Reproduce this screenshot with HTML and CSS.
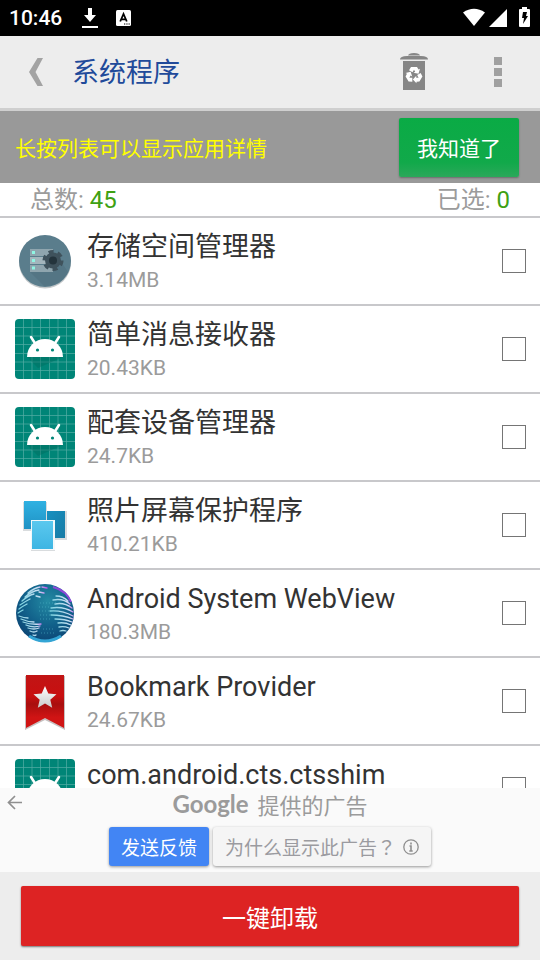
FILE: index.html
```html
<!DOCTYPE html>
<html lang="zh-CN">
<head>
    <meta charset="UTF-8">
    <meta name="viewport" content="width=device-width, initial-scale=1.0">
    <title>系统程序</title>
    <link rel="stylesheet" href="styles.css">
</head>
<body>
    <!-- Shared icons -->
    <svg class="sprite" aria-hidden="true">
        <symbol id="icon-android" viewBox="0 0 60 60">
            <rect width="60" height="60" rx="4" fill="#008577"/>
            <path d="M8.500 0v60M17 0v60M25.500 0v60M34.500 0v60M43 0v60M51.500 0v60M0 8.500h60M0 17h60M0 25.500h60M0 34.500h60M0 43h60M0 51.500h60" stroke="#54aea5" stroke-width="0.700" fill="none"/>
            <path d="M12 38l11 11 25-11z" fill="#00695c" opacity="0.400"/>
            <path d="M12 38a18 18 0 0 1 36 0z" fill="#fff"/>
            <path d="M16 18l4.500 7M44 18l-4.500 7" stroke="#fff" stroke-width="2.500" stroke-linecap="round"/>
            <circle cx="22.500" cy="31" r="1.600" fill="#008577"/>
            <circle cx="37.500" cy="31" r="1.600" fill="#008577"/>
        </symbol>
    </svg>

    <div class="status-bar">
        <span class="clock">10:46</span>
        <svg width="16" height="22" viewBox="0 0 16 22">
            <path d="M6 1h4v7h4l-6 7-6-7h4z" fill="#fff"/>
            <path d="M0 20h16" stroke="#fff" stroke-width="2"/>
        </svg>
        <svg width="15" height="16" viewBox="0 0 15 16">
            <rect width="15" height="16" rx="1.500" fill="#fff"/>
            <path d="M4.200 11.500L7.500 4l3.300 7.500M5.500 9.300h4" fill="none" stroke="#000" stroke-width="1.800"/>
            <path d="M8 14h1.300M10.300 14h1.300M12.500 14h1.300" stroke="#000" stroke-width="1.200"/>
        </svg>
        <div class="status-right">
            <svg width="68" height="22" viewBox="0 0 68 22">
                <path d="M1 5.500Q12 -2 23 5.500L12 19z" fill="#fff"/>
                <path d="M27 20L45 2v18z" fill="#fff"/>
                <path d="M60 0h5v2h2q1 0 1 1v16q0 1-1 1h-9q-1 0-1-1V3q0-1 1-1h2z" fill="#fff"/>
                <path d="M61 5h4l-1 4h2l-5 8 1-6h-2z" fill="#000"/>
            </svg>
        </div>
    </div>

    <header class="app-header">
        <button class="icon-btn" type="button" aria-label="返回">
            <svg width="14" height="28" viewBox="0 0 14 28">
                <path d="M8.500 0H14L6.500 14 14 28H8.500L0 14z" fill="#a3a3a3"/>
            </svg>
        </button>
        <h1>系统程序</h1>
        <button class="icon-btn btn-bin" type="button" aria-label="回收站">
            <svg width="28" height="38" viewBox="0 0 28 38">
                <path d="M8 2.500Q8.500 0 14 0t6 2.500z" fill="#868686"/>
                <path d="M0 6.500Q0 3 7 3h14q7 0 7 3.500z" fill="#868686"/>
                <rect x="3" y="8" width="22" height="29" fill="#868686"/>
                <g fill="#fff">
                    <path id="arc" d="M11 14h6l1.500 2.500 1.500-.8-1.500 5-5-1 1.700-1-1.200-2-1.500 2.500-3.500-2z"/>
                    <use href="#arc" transform="rotate(120 14 22)"/>
                    <use href="#arc" transform="rotate(240 14 22)"/>
                </g>
            </svg>
        </button>
        <button class="icon-btn" type="button" aria-label="更多">
            <svg width="8" height="30" viewBox="0 0 8 30">
                <path d="M0 0h8v8H0zM0 11h8v8H0zM0 22h8v8H0z" fill="#a0a0a0"/>
            </svg>
        </button>
    </header>

    <div class="tip-bar">
        <p>长按列表可以显示应用详情</p>
        <button class="btn-ok" type="button">我知道了</button>
    </div>

    <div class="counts">
        <span>总数: <b>45</b></span>
        <span>已选: <b>0</b></span>
    </div>

    <ul class="app-list">
        <li>
            <label class="app-row">
                <svg class="app-icon" viewBox="0 0 60 60">
                    <circle cx="30" cy="31.500" r="26" fill="#c4c8ca"/>
                    <circle cx="30" cy="30" r="26" fill="#5a7d8c"/>
                    <path d="M15 41l14 14a26 26 0 0 0 24-14L43 26z" fill="#547584"/>
                    <path d="M15 18h23v7H15zM15 34h23v7H15z" fill="#8fa5ae"/>
                    <path d="M15 26h23v7H15z" fill="#a3b5bc"/>
                    <path d="M17 20h3v3h-3zM17 28h3v3h-3zM17 35.500h3v3h-3z" fill="#8ff5e3"/>
                    <circle cx="38" cy="29.500" r="8" fill="#3f525c"/>
                    <circle cx="38" cy="29.500" r="8.800" fill="none" stroke="#3f525c" stroke-width="3.500" stroke-dasharray="5 4.200"/>
                    <circle cx="38" cy="29.500" r="4" fill="#24343c"/>
                </svg>
                <span class="app-info">
                    <span class="app-name">存储空间管理器</span>
                    <span class="app-size">3.14MB</span>
                </span>
                <input type="checkbox">
            </label>
        </li>
        <li>
            <label class="app-row">
                <svg class="app-icon"><use href="#icon-android"/></svg>
                <span class="app-info">
                    <span class="app-name">简单消息接收器</span>
                    <span class="app-size">20.43KB</span>
                </span>
                <input type="checkbox">
            </label>
        </li>
        <li>
            <label class="app-row">
                <svg class="app-icon"><use href="#icon-android"/></svg>
                <span class="app-info">
                    <span class="app-name">配套设备管理器</span>
                    <span class="app-size">24.7KB</span>
                </span>
                <input type="checkbox">
            </label>
        </li>
        <li>
            <label class="app-row">
                <svg class="app-icon" viewBox="0 0 60 60">
                    <defs>
                        <linearGradient id="photo-a" x2="0" y2="1"><stop stop-color="#2fb1e2"/><stop offset="1" stop-color="#2092c4"/></linearGradient>
                        <linearGradient id="photo-b" x2="1" y2="1"><stop stop-color="#1790c0"/><stop offset="1" stop-color="#187ba5"/></linearGradient>
                        <linearGradient id="photo-c" x2="0" y2="1"><stop stop-color="#5bc8ee"/><stop offset="1" stop-color="#3db5e3"/></linearGradient>
                    </defs>
                    <path d="M8 7h24v29H8zM31 16h21v29H31zM16 25h24v31H16z" fill="#d9dcde"/>
                    <rect x="9" y="6" width="22" height="28" fill="url(#photo-a)"/>
                    <rect x="32" y="16" width="18" height="27" fill="url(#photo-b)"/>
                    <rect x="16" y="25" width="24" height="30" fill="#f3f8fa"/>
                    <rect x="17" y="26" width="21" height="28" fill="url(#photo-c)"/>
                </svg>
                <span class="app-info">
                    <span class="app-name">照片屏幕保护程序</span>
                    <span class="app-size">410.21KB</span>
                </span>
                <input type="checkbox">
            </label>
        </li>
        <li>
            <label class="app-row">
                <svg class="app-icon" viewBox="0 0 60 60">
                    <defs>
                        <radialGradient id="globe" cx="0.550" cy="0.300" r="0.700">
                            <stop stop-color="#238aa3"/>
                            <stop offset="0.600" stop-color="#11608a"/>
                            <stop offset="1" stop-color="#0c4675"/>
                        </radialGradient>
                        <linearGradient id="land" x1="0" y1="0.300" x2="1" y2="0">
                            <stop stop-color="#7fd3e0"/>
                            <stop offset="0.700" stop-color="#c9ddf2"/>
                            <stop offset="1" stop-color="#c04ee8"/>
                        </linearGradient>
                    </defs>
                    <circle cx="30" cy="30" r="29" fill="url(#globe)"/>
                    <g fill="none" stroke="url(#land)" stroke-width="1.300" stroke-linecap="round">
                        <path d="M13 10q6-5 12-6M10 14q7-6 14-7M7 18q7-6 12-7M5 22q6-4 10-6M4 26q4-3 8-5M3 30q3-2 5-3M27 4l5 1M24 9l5 1M21 13l4 1"/>
                        <path d="M4 33q5 2 9 2M6 36q7 3 13 3M8 39q8 3 18 2M11 42q7 3 14 1M13 45q6 2 11 0M15 48q4 2 7 0M18 52q2 1 3 0"/>
                        <path d="M41 13q7 0 12 5M38 17q10-2 17 4M40 21q9-2 17 4M36 25q12-2 22 4M35 28q12-1 23 5M36 32q12 0 22 4M40 36q10 0 17 3M43 40q7-1 13 2M44 44q5-1 10 1M45 48q3-1 6 0"/>
                    </g>
                    <path d="M38 4q14 4 18 15" fill="none" stroke="#8e48d8" stroke-width="2"/>
                    <path d="M14 53q16 10 32 0" fill="none" stroke="#33a5d5" stroke-width="3"/>
                    <path d="M25 20h16M24 24h11M24 28h10M25 32h10M25 36h12M28 46h12M26 50h14" stroke="#4fb2c5" stroke-dasharray="1 2" opacity="0.600"/>
                </svg>
                <span class="app-info">
                    <span class="app-name">Android System WebView</span>
                    <span class="app-size">180.3MB</span>
                </span>
                <input type="checkbox">
            </label>
        </li>
        <li>
            <label class="app-row">
                <svg class="app-icon" viewBox="0 0 60 60">
                    <defs>
                        <linearGradient id="ribbon" x2="0" y2="1">
                            <stop stop-color="#c11515"/>
                            <stop offset="0.400" stop-color="#c80f10"/>
                            <stop offset="0.550" stop-color="#a80e0e"/>
                            <stop offset="0.800" stop-color="#d01414"/>
                        </linearGradient>
                        <linearGradient id="star" x2="0" y2="1"><stop stop-color="#fff"/><stop offset="1" stop-color="#c9c9c9"/></linearGradient>
                    </defs>
                    <path d="M10 5h40v54L30 49 10 59z" fill="#c6c0c0"/>
                    <path d="M11 4h38v53L30 47 11 57z" fill="url(#ribbon)"/>
                    <path d="M30 15l3.300 7.500 8.200.8-6.200 5.400 1.900 8.100-7.200-4.300-7.200 4.300 1.900-8.100-6.200-5.400 8.200-.8z" fill="url(#star)"/>
                </svg>
                <span class="app-info">
                    <span class="app-name">Bookmark Provider</span>
                    <span class="app-size">24.67KB</span>
                </span>
                <input type="checkbox">
            </label>
        </li>
        <li>
            <label class="app-row">
                <svg class="app-icon"><use href="#icon-android"/></svg>
                <span class="app-info">
                    <span class="app-name">com.android.cts.ctsshim</span>
                </span>
                <input type="checkbox">
            </label>
        </li>
    </ul>

    <section class="ad">
        <button class="ad-back" type="button" aria-label="返回广告">
            <svg width="15" height="15" viewBox="0 0 15 15">
                <path d="M15 7.500H1.500M8 1L1.500 7.500 8 14" fill="none" stroke="#8f8f8f" stroke-width="1.700"/>
            </svg>
        </button>
        <p class="ad-title"><span class="google">Google</span> 提供的广告</p>
        <div class="ad-actions">
            <button class="btn-feedback" type="button">发送反馈</button>
            <button class="btn-why" type="button">
                <span>为什么显示此广告<span class="mark" lang="zh-TW">？</span></span>
                <svg width="16" height="16" viewBox="0 0 16 16">
                    <circle cx="8" cy="8" r="7.200" fill="none" stroke="#8f8f8f" stroke-width="1.300"/>
                    <path d="M8 3.500v2M6.500 7H8v5M6.300 12h3.400" fill="none" stroke="#8f8f8f" stroke-width="1.600"/>
                </svg>
            </button>
        </div>
    </section>

    <footer class="footer">
        <button class="btn-uninstall" type="button">一键卸载</button>
    </footer>
</body>
</html>
```
FILE: styles.css
```css
:root {
    --bg-bar: #ededed;
    --line: #c8c8cb;
    --text-primary: #333333;
    --text-light: #9b9b9b;
    --green: #3ea113;
}

* {
    box-sizing: border-box;
}

body {
    margin: 0;
    height: 100vh;
    display: flex;
    flex-direction: column;
    font-family: Roboto, 'Noto Sans CJK SC', sans-serif;
    background-color: #ffffff;
    color: var(--text-primary);
}

h1, p, ul {
    margin: 0;
    padding: 0;
}

button {
    margin: 0;
    padding: 0;
    border: none;
    background: none;
    font-family: inherit;
    cursor: pointer;
}

svg {
    display: block;
    flex-shrink: 0;
}

.sprite {
    position: absolute;
    width: 0;
    height: 0;
}

/* Status bar */
.status-bar {
    flex: 0 0 36px;
    display: flex;
    align-items: center;
    gap: 18px;
    padding: 0 10px 0 9px;
    background-color: #000000;
    color: #ffffff;
}

.clock {
    font-size: 21px;
    font-weight: 500;
    margin-right: 2px;
}

.status-right {
    margin-left: auto;
}

/* Header */
.app-header {
    flex: 0 0 75px;
    display: flex;
    align-items: center;
    padding: 0 13px 0 7px;
    background-color: var(--bg-bar);
    border-bottom: 3px solid #cfcfcf;
}

.icon-btn {
    width: 58px;
    height: 60px;
    display: flex;
    align-items: center;
    justify-content: center;
}

.btn-bin {
    margin-left: auto;
    margin-right: 26px;
}

h1 {
    margin-left: 7px;
    padding-top: 2px;
    font-size: 27px;
    font-weight: 400;
    line-height: 36px;
    color: #214a9a;
}

/* Tip */
.tip-bar {
    flex: 0 0 72px;
    display: flex;
    align-items: center;
    justify-content: space-between;
    padding: 0 21px 0 15px;
    background-color: #999999;
    color: #ffff00;
    font-size: 21px;
}

.btn-ok {
    width: 120px;
    height: 59px;
    border-radius: 2px;
    background: linear-gradient(#0aab45, #11a94a 75%, #2ba85a);
    box-shadow: 0 1px 2px rgba(0, 0, 0, 0.3);
    color: #ffffff;
    font-size: 21px;
}

.counts {
    flex: 0 0 35px;
    display: flex;
    justify-content: space-between;
    padding: 2px 30px 0;
    border-bottom: 2px solid var(--line);
    color: var(--text-light);
    font-size: 24px;
    line-height: 31px;
}

.counts b {
    font-weight: 400;
    color: var(--green);
}

/* App list */
.app-list {
    flex: 1 1 0;
    min-height: 0;
    overflow-y: auto;
    scrollbar-width: none;
    list-style: none;
}

.app-row {
    display: flex;
    align-items: center;
    gap: 12px;
    height: 88px;
    padding: 0 14px 0 15px;
    border-bottom: 2px solid var(--line);
}

.app-icon {
    width: 60px;
    height: 60px;
}

.app-info {
    flex: 1;
    align-self: flex-start;
    padding-top: 11px;
}

.app-name,
.app-size {
    display: block;
    white-space: nowrap;
}

.app-name {
    font-size: 27px;
    line-height: 36px;
}

.app-size {
    font-size: 21px;
    line-height: 30px;
    color: var(--text-light);
}

.app-row input {
    appearance: none;
    width: 24px;
    height: 24px;
    margin: 0;
    border: 1px solid #757575;
    background-color: #ffffff;
}

.app-row input:checked {
    background-color: var(--green);
}

/* Ad */
.ad {
    flex: 0 0 84px;
    position: relative;
    display: flex;
    flex-direction: column;
    align-items: center;
    gap: 8px;
    background-color: #fafafa;
}

.ad-back {
    position: absolute;
    top: 7px;
    left: 7px;
}

.ad-title {
    display: flex;
    align-items: center;
    gap: 9px;
    height: 31px;
    color: var(--text-light);
    font-size: 22px;
}

.google {
    font-family: Lato, sans-serif;
    font-size: 24px;
    font-weight: 700;
}

.ad-actions {
    display: flex;
    gap: 4px;
}

.ad-actions button {
    height: 39px;
    padding: 0 12px;
    border-radius: 3px;
    box-shadow: 0 1px 3px rgba(0, 0, 0, 0.4);
    font-size: 19px;
}

.ad-actions .btn-feedback {
    background-color: #4285f4;
    color: #ffffff;
}

.ad-actions .btn-why {
    display: flex;
    align-items: center;
    gap: 7px;
    background-color: #f5f5f5;
    color: #9b9ba0;
}

/* Centred full-width question mark */
.mark {
    font-family: 'Noto Sans CJK TC', sans-serif;
}

/* Footer */
.footer {
    flex: 0 0 88px;
    padding: 14px 21px;
    background-color: var(--bg-bar);
}

.btn-uninstall {
    width: 100%;
    height: 60px;
    border-radius: 2px;
    background-color: #dd2323;
    box-shadow: 0 1px 2px rgba(0, 0, 0, 0.5);
    color: #ffffff;
    font-size: 24px;
}
```
